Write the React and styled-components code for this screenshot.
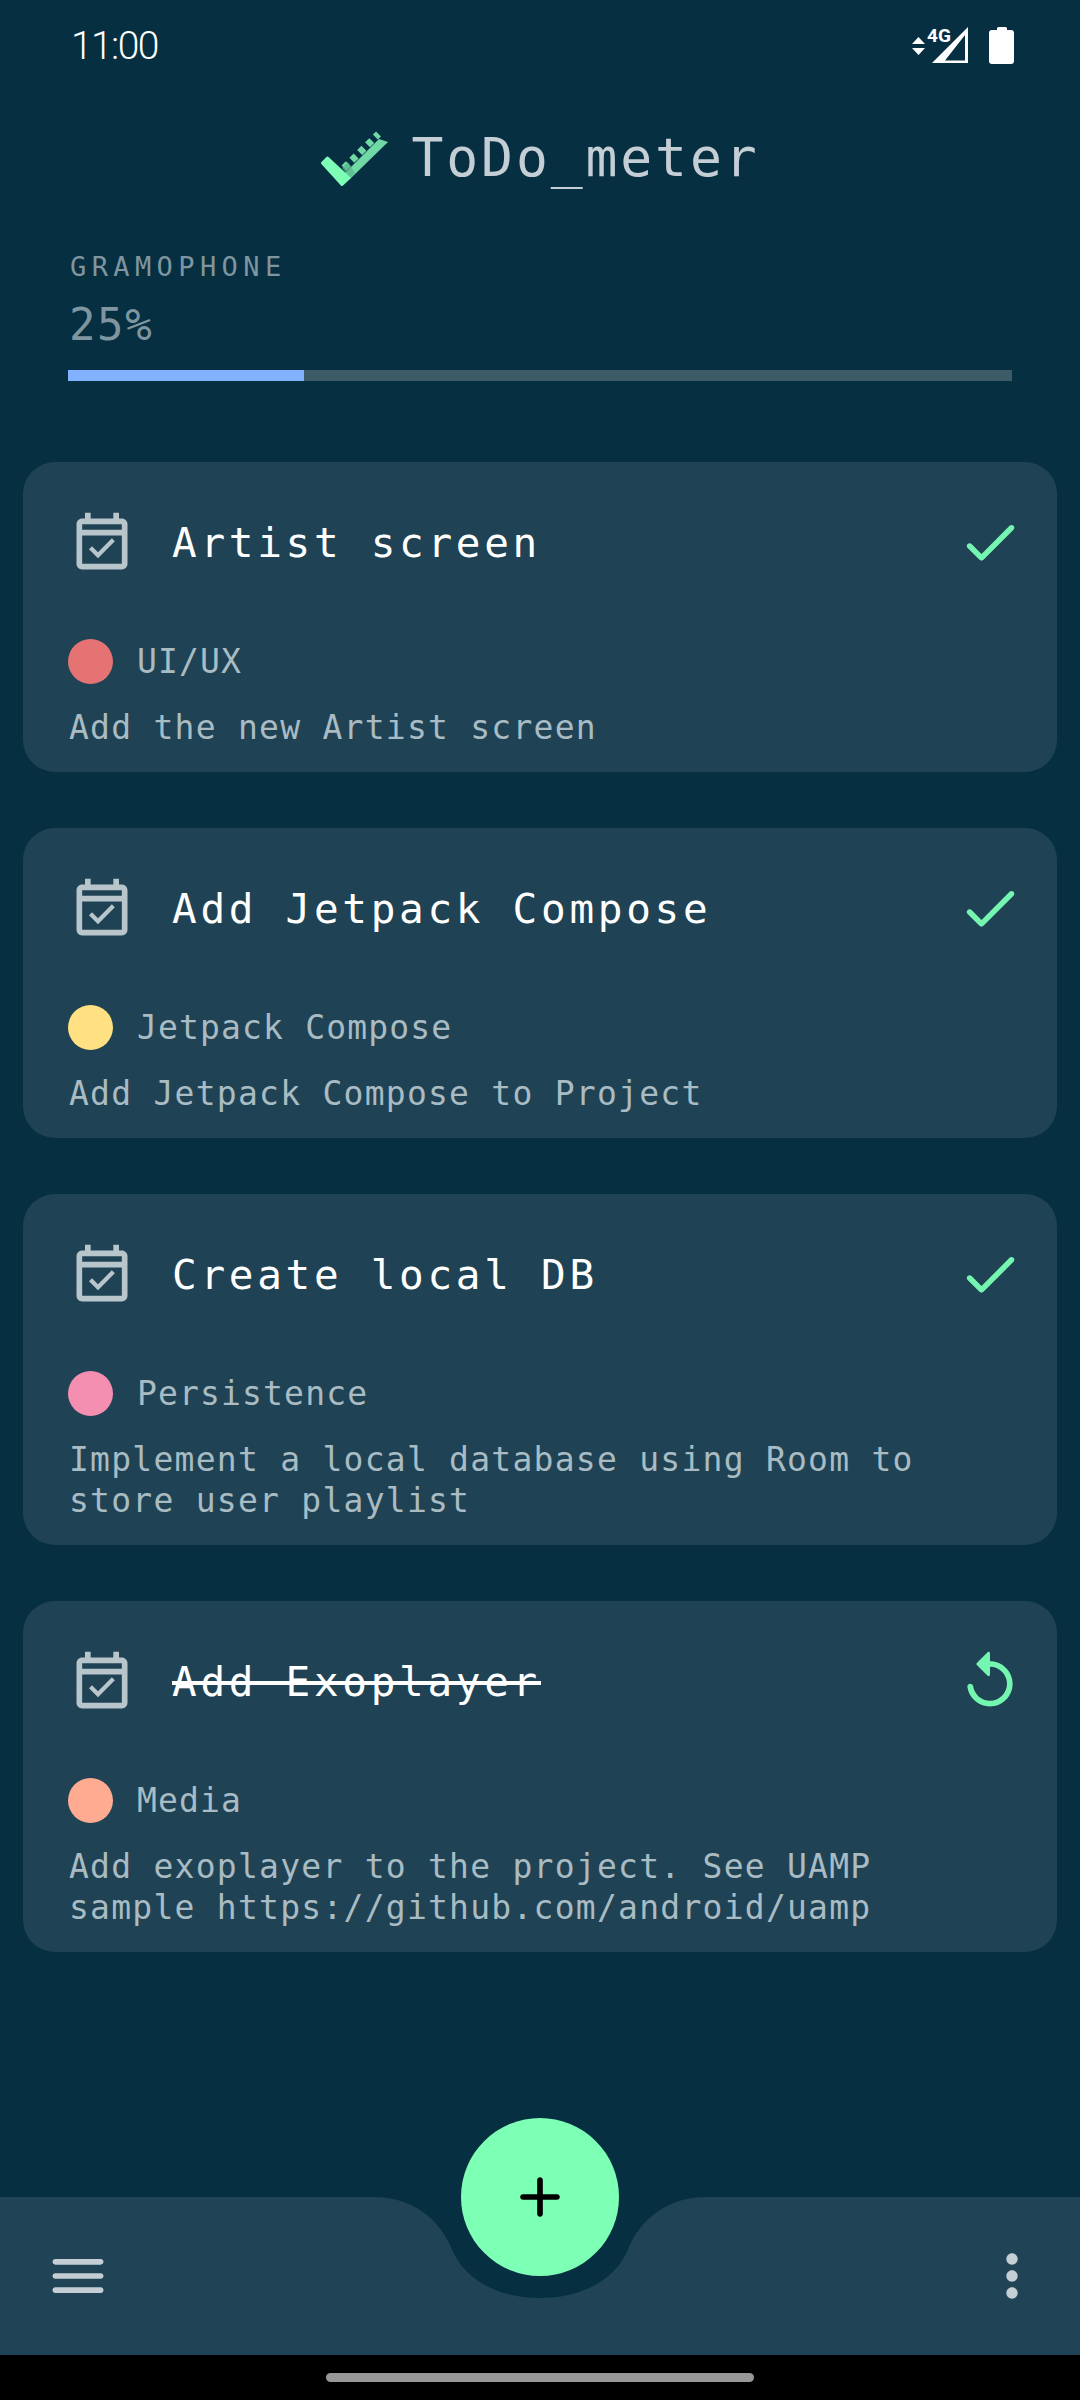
import React from "react";
import styled, { createGlobalStyle } from "styled-components";

const mono = `"DejaVu Sans Mono", "Liberation Mono", monospace`;

const Global = createGlobalStyle`
  html, body { margin: 0; padding: 0; background: #062f42; }
  * { box-sizing: border-box; }
`;

const Screen = styled.div`
  width: 1080px;
  height: 2400px;
  display: flex;
  flex-direction: column;
  background: #062f42;
  overflow: hidden;
  font-family: ${mono};
`;

const StatusBar = styled.div`
  height: 91px;
  flex: none;
  display: flex;
  align-items: center;
  justify-content: space-between;
  padding: 0 66px 0 71px;
`;

const Time = styled.span`
  font-family: Roboto, sans-serif;
  font-size: 39px;
  font-weight: 300;
  letter-spacing: -1.6px;
  color: #fff;
`;

const StatusIcons = styled.svg`
  display: block;
  width: 102px;
  height: 52px;
`;

const Brand = styled.div`
  height: 80px;
  margin-top: 27px;
  display: flex;
  align-items: center;
  justify-content: center;
  gap: 23px;
  padding-right: 1px;
`;

const BrandName = styled.span`
  font-size: 53px;
  line-height: 80px;
  letter-spacing: 2.9px;
  color: #c4ced4;
`;

const Progress = styled.section`
  margin-top: 54px;
  padding: 0 68px;
`;

const ProjectName = styled.div`
  font-size: 27px;
  line-height: 30px;
  letter-spacing: 5.4px;
  color: #7f959f;
  margin-left: 2px;
`;

const Percent = styled.div`
  margin-top: 18px;
  font-size: 44px;
  line-height: 50px;
  letter-spacing: 1.6px;
  color: #7f959f;
  margin-left: 1px;
`;

const Track = styled.div`
  margin-top: 20px;
  height: 11px;
  background: #3d5a67;
`;

const Fill = styled.div`
  height: 100%;
  background: #82b1ff;
`;

const List = styled.main`
  margin-top: 81px;
  padding: 0 23px;
  display: flex;
  flex-direction: column;
  gap: 56px;
`;

const Card = styled.article`
  background: #1f4354;
  border-radius: 32px;
  padding: 48px 33px 24px 45px;
`;

const CardHead = styled.div`
  display: flex;
  align-items: center;
  height: 68px;
`;

const CalendarSvg = styled.svg`
  width: 68px;
  height: 68px;
  flex: none;
  fill: #b8c6cc;
`;

const Title = styled.h2`
  flex: 1;
  margin: 0 0 3px 36px;
  font-size: 41px;
  line-height: 56px;
  font-weight: 400;
  letter-spacing: 3.7px;
  color: #fff;
  text-decoration: ${(p) => (p.$done ? "line-through" : "none")};
`;

const ActionSvg = styled.svg`
  width: 68px;
  height: 68px;
  flex: none;
  margin-top: -4px;
  fill: #74f5b0;
`;

const Tag = styled.div`
  margin-top: 61px;
  display: flex;
  align-items: center;
  gap: 24px;
  height: 45px;
`;

const Dot = styled.span`
  width: 45px;
  height: 45px;
  border-radius: 50%;
  flex: none;
  background: ${(p) => p.$color};
`;

const TagName = styled.span`
  font-size: 33px;
  letter-spacing: 1.15px;
  color: #a9bbc3;
`;

const Description = styled.p`
  margin: 23px 0 0 1px;
  padding-right: 30px;
  font-size: 33px;
  line-height: 41px;
  letter-spacing: 1.25px;
  color: #a9bbc3;
`;

const Spacer = styled.div`
  flex: 1;
`;

const BottomBar = styled.footer`
  position: relative;
  flex: none;
  height: 158px;
  background: #204355;
  display: flex;
  align-items: center;
  justify-content: space-between;
  padding: 0 34px 0 44px;
`;

const BarIcon = styled.svg`
  position: relative;
  width: 68px;
  height: 68px;
  fill: #c4ced4;
`;

const Notch = styled.svg`
  position: absolute;
  left: 370px;
  top: 0;
  width: 340px;
  height: 102px;
  fill: #062f42;
`;

const Fab = styled.button`
  position: absolute;
  left: 461px;
  top: -79px;
  width: 158px;
  height: 158px;
  padding: 0;
  border: none;
  border-radius: 50%;
  background: #7dffb6;
  display: flex;
  align-items: center;
  justify-content: center;
`;

const FabIcon = styled.svg`
  width: 68px;
  height: 68px;
  fill: #000;
`;

const NavBar = styled.div`
  flex: none;
  height: 45px;
  background: #000;
  display: flex;
  justify-content: center;
  padding-top: 18px;
`;

const Handle = styled.div`
  width: 428px;
  height: 9px;
  border-radius: 5px;
  background: #989898;
`;

const tasks = [
  { title: "Artist screen", tag: "UI/UX", color: "#e57373", text: "Add the new Artist screen" },
  { title: "Add Jetpack Compose", tag: "Jetpack Compose", color: "#ffe082", text: "Add Jetpack Compose to Project" },
  { title: "Create local DB", tag: "Persistence", color: "#f48fb1", text: "Implement a local database using Room to store user playlist" },
  { title: "Add Exoplayer", tag: "Media", color: "#ffab91", text: "Add exoplayer to the project. See UAMP sample https://github.com/android/uamp", done: true },
];

const Calendar = () => (
  <CalendarSvg viewBox="0 0 24 24">
    <path d="M16.53 11.06L15.47 10l-4.88 4.88-2.12-2.12-1.06 1.06L10.59 17l5.94-5.94zM19 3h-1V1h-2v2H8V1H6v2H5c-1.11 0-1.99.9-1.99 2L3 19c0 1.1.89 2 2 2h14c1.1 0 2-.9 2-2V5c0-1.1-.9-2-2-2zm0 16H5V9h14v10zm0-12H5V5h14v2z" />
  </CalendarSvg>
);

const Action = ({ done }) =>
  done ? (
    <ActionSvg viewBox="0 0 24 24">
      <path d="M12 5V2.2c0-.45-.54-.67-.85-.35L7.35 5.650c-.2.2-.2.51 0 .71l3.8 3.8c.31.31.85.09.85-.36V7c3.31 0 6 2.69 6 6 0 3.31-2.69 6-6 6-2.98 0-5.45-2.18-5.92-5.02C6.02 13.4 5.57 13 5 13c-.6 0-1.08.53-.99 1.12C4.57 17.99 7.94 21 12 21c4.42 0 8-3.58 8-8s-3.58-8-8-8z" />
    </ActionSvg>
  ) : (
    <ActionSvg viewBox="0 0 24 24">
      <path d="M9 16.2l-3.5-3.5c-.39-.39-1.01-.39-1.4 0-.39.39-.39 1.01 0 1.4l4.19 4.19c.39.39 1.02.39 1.41 0L20.3 7.7c.39-.39.39-1.01 0-1.4-.39-.39-1.01-.39-1.4 0L9 16.2z" />
    </ActionSvg>
  );

export default function App() {
  return (
    <Screen>
      <Global />
      <StatusBar>
        <Time>11:00</Time>
        <StatusIcons viewBox="912 20 102 52">
          <path fill="#fff" d="M918.5 37l6.5 7h-13zM918.5 55l-6.5-7h13z" />
          <path fill="#fff" fillRule="evenodd" d="M968 27v36h-36zM965 35l-20 25.500h20z" />
          <text x="927" y="42" fontFamily="Roboto, sans-serif" fontWeight="700" fontSize="19" fill="#fff">4G</text>
          <path fill="#fff" d="M997 30v-1.500q0-1.500 1.500-1.500h7q1.500 0 1.500 1.500v1.500h4q3 0 3 3v28q0 3-3 3h-19q-3 0-3-3v-28q0-3 3-3z" />
        </StatusIcons>
      </StatusBar>

      <Brand>
        <svg width="69" height="55" viewBox="320 130 69 55" aria-hidden="true">
          <path fill="#70d9a6" d="M346 172L380 138L389 141L351 178z" />
          <path stroke="#70d9a6" strokeWidth="7" strokeDasharray="6 5" fill="none" d="M345 167L379.500 133" />
          <path fill="#58b78c" d="M343 167L349 161L356 172L351 177z" opacity="0.7" />
          <path fill="#7dffb6" stroke="#7dffb6" strokeWidth="3" strokeLinejoin="round" d="M323.500 162L328.500 157L350 177L343 183.500z" />
        </svg>
        <BrandName>ToDo_meter</BrandName>
      </Brand>

      <Progress>
        <ProjectName>GRAMOPHONE</ProjectName>
        <Percent>25%</Percent>
        <Track>
          <Fill style={{ width: "25%" }} />
        </Track>
      </Progress>

      <List>
        {tasks.map((t) => (
          <Card key={t.title}>
            <CardHead>
              <Calendar />
              <Title $done={t.done}>{t.title}</Title>
              <Action done={t.done} />
            </CardHead>
            <Tag>
              <Dot $color={t.color} />
              <TagName>{t.tag}</TagName>
            </Tag>
            <Description>{t.text}</Description>
          </Card>
        ))}
      </List>

      <Spacer />

      <BottomBar>
        <Notch viewBox="0 0 340 102">
          <path d="M0 0H4C40 0 68 20 81 50C92 80 125 101 170 101C215 101 248 80 259 50C272 20 300 0 336 0H340z" />
        </Notch>
        <BarIcon viewBox="0 0 24 24">
          <path d="M4 18h16c.55 0 1-.45 1-1s-.45-1-1-1H4c-.55 0-1 .45-1 1s.45 1 1 1zm0-5h16c.55 0 1-.45 1-1s-.45-1-1-1H4c-.55 0-1 .45-1 1s.45 1 1 1zM3 7c0 .55.45 1 1 1h16c.55 0 1-.45 1-1s-.45-1-1-1H4c-.55 0-1 .45-1 1z" />
        </BarIcon>
        <Fab aria-label="Add task">
          <FabIcon viewBox="0 0 24 24">
            <path d="M18 13h-5v5c0 .55-.45 1-1 1s-1-.45-1-1v-5H6c-.55 0-1-.45-1-1s.45-1 1-1h5V6c0-.55.45-1 1-1s1 .45 1 1v5h5c.55 0 1 .45 1 1s-.45 1-1 1z" />
          </FabIcon>
        </Fab>
        <BarIcon viewBox="0 0 24 24">
          <path d="M12 8c1.100 0 2-.9 2-2s-.9-2-2-2-2 .9-2 2 .9 2 2 2zm0 2c-1.100 0-2 .9-2 2s.9 2 2 2 2-.9 2-2-.9-2-2-2zm0 6c-1.100 0-2 .9-2 2s.9 2 2 2 2-.9 2-2-.9-2-2-2z" />
        </BarIcon>
      </BottomBar>

      <NavBar>
        <Handle />
      </NavBar>
    </Screen>
  );
}
